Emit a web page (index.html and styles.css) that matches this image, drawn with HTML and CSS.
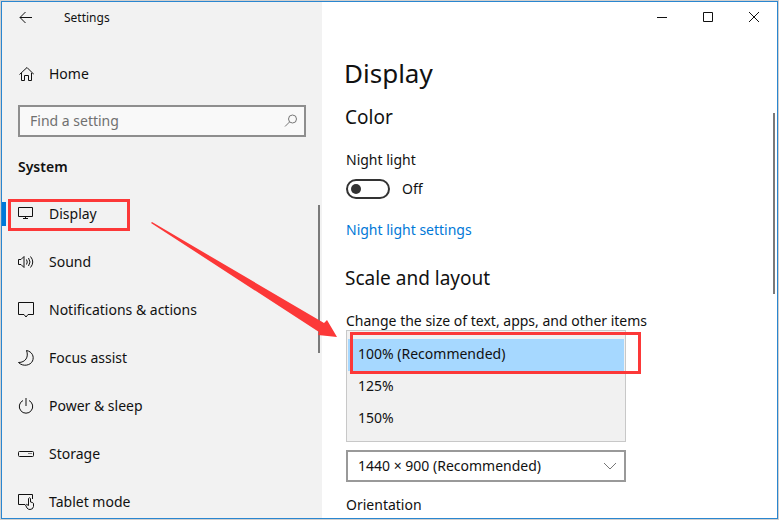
FILE: index.html
```html
<!DOCTYPE html>
<html lang="en">
<head>
<meta charset="utf-8">
<title>Settings</title>
<link rel="stylesheet" href="styles.css">
</head>
<body>
<div class="window">
  <aside class="sidebar">
    <header class="titlebar">
      <button class="back" type="button" aria-label="Back">
        <svg width="14" height="14" viewBox="0 0 14 14"><path d="M13 6.500H1M6.500 1L1 6.500l5.500 5.500"/></svg>
      </button>
      <span class="app-name">Settings</span>
    </header>
    <a class="home" href="#">
      <svg class="icon" width="16" height="16" viewBox="0 0 16 16"><path d="M1.500 8.500L9 1.500l7 7M3.500 7v7.500h3V9.500h4v5h3V7"/></svg>
      Home
    </a>
    <div class="search">
      <input type="text" placeholder="Find a setting" aria-label="Find a setting">
      <svg width="14" height="14" viewBox="0 0 14 14"><circle cx="8.500" cy="5" r="4"/><path d="M5.500 8L1 12.500"/></svg>
    </div>
    <h2 class="group">System</h2>
    <nav class="nav">
      <a class="nav-item current" href="#" aria-current="page">
        <svg class="icon" width="16" height="16" viewBox="0 0 16 16"><path d="M.5 1.500h14v9H.5zM7.500 10.500v2M5 12.500h5"/></svg>
        Display
      </a>
      <a class="nav-item" href="#">
        <svg class="icon" width="16" height="16" viewBox="0 0 16 16"><path d="M.5 5.500h2.500l3-3v11l-3-3H.5zM8.500 5.500q1.500 2.500 0 5M10.500 4q3 4 0 8M12.500 2.500q4.500 5.500 0 11"/></svg>
        Sound
      </a>
      <a class="nav-item" href="#">
        <svg class="icon" width="16" height="16" viewBox="0 0 16 16"><path d="M.5.5h15v12h-5.500L8 15l-2-2.500H.5z"/></svg>
        Notifications &amp; actions
      </a>
      <a class="nav-item" href="#">
        <svg class="icon" width="16" height="16" viewBox="0 0 16 16"><path d="M8.500.5C14 1.500 16.500 6.500 14.500 11 12.500 15.500 5 17 .5 12.500 7.500 12.500 11 7 8.500.5z"/></svg>
        Focus assist
      </a>
      <a class="nav-item" href="#">
        <svg class="icon" width="16" height="16" viewBox="0 0 16 16"><path d="M5 2.500a6.700 6.700 0 1 0 6 0M8 0v8"/></svg>
        Power &amp; sleep
      </a>
      <a class="nav-item" href="#">
        <svg class="icon" width="16" height="16" viewBox="0 0 16 16"><rect x=".5" y="5.500" width="15" height="5" rx="1"/><path d="M10.500 7.500h1M12.500 7.500h1"/></svg>
        Storage
      </a>
      <a class="nav-item" href="#">
        <svg class="icon" width="16" height="16" viewBox="0 0 16 16"><path d="M7 10.500H.5v-10h14V5M10.500 10V4.500q1-1.500 2 0V8l2 .5q1 .5 1 1.500v2.500q-.5 3-3.500 3-2 0-3-1.500L7.500 11q.5-1.500 3 .5V9"/></svg>
        Tablet mode
      </a>
    </nav>
    <span class="scrollbar side-scroll"></span>
  </aside>

  <main class="content">
    <div class="controls">
      <button type="button" aria-label="Minimize"><svg width="12" height="12" viewBox="0 0 12 12"><path d="M1 5.500h10"/></svg></button>
      <button type="button" aria-label="Maximize"><svg width="12" height="12" viewBox="0 0 12 12"><path d="M1.500.5h9v9h-9z"/></svg></button>
      <button type="button" aria-label="Close"><svg width="12" height="12" viewBox="0 0 12 12"><path d="M1 0l10 10M11 0L1 10"/></svg></button>
    </div>
    <h1>Display</h1>
    <h2>Color</h2>
    <label class="label" for="night">Night light</label>
    <div class="toggle-row">
      <input class="toggle" id="night" type="checkbox" role="switch">
      <span>Off</span>
    </div>
    <a class="link" href="#">Night light settings</a>
    <h2>Scale and layout</h2>
    <label class="label" for="scale">Change the size of text, apps, and other items</label>
    <div class="list-wrap">
      <select class="scale-list" id="scale" size="3">
        <option selected>100% (Recommended)</option>
        <option>125%</option>
        <option>150%</option>
      </select>
      <span class="mark mark-option"></span>
    </div>
    <div class="resolution">
      <select aria-label="Resolution"><option>1440 × 900 (Recommended)</option></select>
      <svg width="14" height="8" viewBox="0 0 14 8"><path d="M1 1l6 6 6-6"/></svg>
    </div>
    <p class="label">Orientation</p>
    <span class="scrollbar main-scroll"></span>
  </main>

  <span class="mark mark-nav"></span>
  <svg class="arrow" width="188" height="118" viewBox="0 0 188 118"><path d="M1 0L173 101l3-3 10 17-19-2 1-3L0 1z"/></svg>
</div>
</body>
</html>
```
FILE: styles.css
```css
* { box-sizing: border-box; }

body {
  margin: 0;
  height: 100vh;
  padding: 1px;
  background: #d2d0ce;
  color: #111;
  font: 14px/20px "Noto Sans", "Open Sans", sans-serif;
  overflow: hidden;
}

a { color: inherit; text-decoration: none; }
h1, h2, p { margin: 0; font-weight: 400; }
button { border: 0; padding: 0; background: none; }
svg { fill: none; stroke: #111; flex: none; }

.window {
  position: relative;
  display: grid;
  grid-template-columns: 320px 1fr;
  height: calc(100vh - 2px);
  border: 1px solid #2a86d0;
  background: #fff;
  overflow: hidden;
}

.sidebar {
  position: relative;
  background: #f2f2f2;
  overflow: hidden;
}

.titlebar {
  display: flex;
  align-items: center;
  gap: 31px;
  height: 32px;
  padding-left: 17px;
  font-size: 12px;
}
.back { display: flex; }

.home, .nav-item {
  display: flex;
  align-items: center;
  gap: 15px;
  height: 48px;
  padding-left: 16px;
}
.home { margin: 16px 0 7px; }

.search {
  display: flex;
  align-items: center;
  height: 32px;
  margin: 0 16px;
  padding: 0 6px 0 10px;
  border: 2px solid #8e8e8e;
  background: #f9f9f9;
}
.search input {
  flex: 1;
  min-width: 0;
  padding: 0;
  border: 0;
  background: none;
  font: inherit;
}
.search input::placeholder { color: #707070; }
.search svg { stroke: #777; }

.sidebar .group {
  margin: 20px 0 13px 16px;
  font-size: 14px;
  font-weight: 600;
}

.current { position: relative; }
.current::before {
  content: "";
  position: absolute;
  left: 0;
  top: 12px;
  width: 4px;
  height: 24px;
  background: #0078d7;
}

.content {
  position: relative;
  padding-left: 24px;
}
.controls {
  display: flex;
  justify-content: flex-end;
  height: 32px;
}
.controls button {
  display: flex;
  align-items: center;
  justify-content: center;
  width: 46px;
}

h1 {
  margin: 19px 0 0 -2px;
  font-size: 26px;
  line-height: 40px;
}
.content h2 {
  margin: 10px 0 19px -1px;
  font-size: 19px;
  line-height: 28px;
}
.label { display: block; }

.toggle-row {
  display: flex;
  align-items: center;
  gap: 12px;
  margin: 9px 0 21px;
}
.toggle {
  appearance: none;
  display: flex;
  align-items: center;
  width: 44px;
  height: 20px;
  margin: 0;
  padding-left: 3px;
  border: 2px solid #333;
  border-radius: 10px;
}
.toggle::before {
  content: "";
  width: 10px;
  height: 10px;
  border-radius: 50%;
  background: #333;
}

.link { display: block; margin-bottom: 24px; color: #0078d7; }

.list-wrap { position: relative; width: 280px; margin-top: -1px; }
.scale-list {
  appearance: none;
  display: block;
  width: 100%;
  height: 112px;
  padding: 8px 1px 6px;
  border: 1px solid #c8c8c8;
  border-radius: 0;
  background: #f1f1f1;
  color: #111;
  font: inherit;
  overflow: hidden;
  outline: none;
}
.scale-list option {
  height: 32px;
  padding: 5px 10px;
  line-height: 20px;
  color: #111;
}
.scale-list option:checked {
  background: #a6d8ff linear-gradient(#a6d8ff, #a6d8ff);
  -webkit-text-fill-color: #111;
}

.resolution {
  display: flex;
  align-items: center;
  width: 280px;
  height: 32px;
  margin: 8px 0 13px;
  padding: 0 7px 0 10px;
  border: 2px solid #999;
}
.resolution select {
  appearance: none;
  flex: 1;
  padding: 0;
  border: 0;
  background: none;
  color: inherit;
  font: inherit;
}
.resolution svg { stroke: #777; }

.scrollbar {
  position: absolute;
  width: 2px;
  background: #7a7a7a;
}
.side-scroll { right: 2px; top: 203px; height: 148px; }
.main-scroll { right: 2px; top: 111px; height: 181px; }

.mark {
  position: absolute;
  border: 3px solid #fc3838;
}
.mark-nav { left: 6px; top: 197px; width: 122px; height: 32px; }
.mark-option { left: 4px; top: 2px; width: 291px; height: 42px; }

.arrow {
  position: absolute;
  left: 149px;
  top: 220px;
  fill: #fc3838;
  stroke: none;
}
```
